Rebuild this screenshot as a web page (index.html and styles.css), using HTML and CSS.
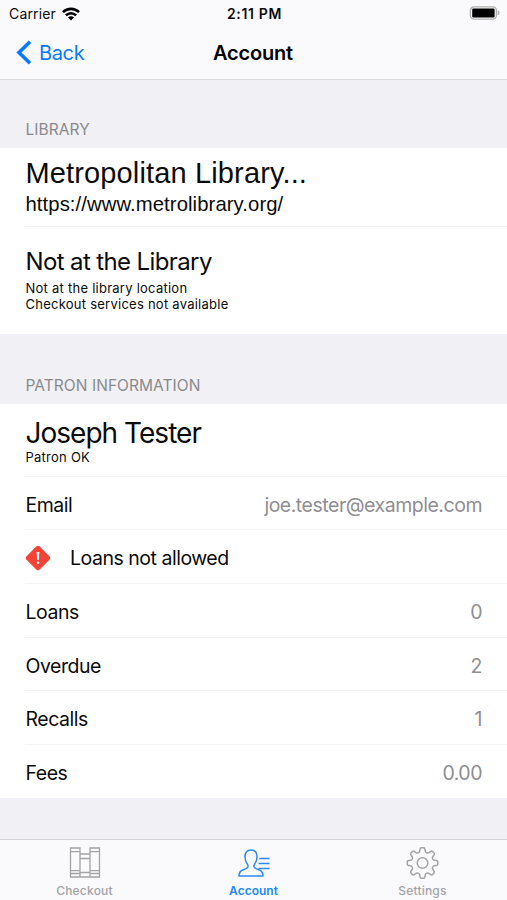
FILE: index.html
```html
<!DOCTYPE html>
<html lang="en">
<head>
<meta charset="utf-8">
<title>Account</title>
<link rel="stylesheet" href="styles.css">
</head>
<body>
<div class="app">
  <header class="top">
    <div class="status">
      <div class="carrier"><span>Carrier</span>
        <svg width="18" height="14" viewBox="0 0 18 14"><path d="M1 5.2A11.3 11.3 0 0 1 17 5.2M3.9 8.3A7.2 7.2 0 0 1 14.1 8.3" fill="none" stroke="#000" stroke-width="2.6"/><path d="M9 13.4L6 10.5A4.2 4.2 0 0 1 12 10.5Z"/></svg>
      </div>
      <span class="time">2:11 PM</span>
      <svg class="battery" width="31" height="15" viewBox="0 0 31 15"><rect x="1.4" y=".9" width="26" height="12.2" rx="3.5" fill="#fafafc" stroke="#b0b0b0" stroke-width="1.4"/><rect x="3.2" y="2.6" width="22.4" height="8.8" rx="1.2"/><path d="M28.7 4.6Q30.6 5.1 30.6 7T28.7 9.4Z" fill="#b0b0b0"/></svg>
    </div>
    <nav class="nav">
      <a class="back"><svg width="16" height="25" viewBox="0 0 16 25"><path d="M14 1.8L3 12.5L14 23.2" fill="none" stroke="#087aff" stroke-width="3.6"/></svg><span>Back</span></a>
      <h1 class="title">Account</h1>
      <span></span>
    </nav>
  </header>
  <main class="content">
    <h2 class="section section-library">LIBRARY</h2>
    <section class="group">
      <div class="row library"><div class="library-name">Metropolitan Library...</div><div class="library-url">https://www.metrolibrary.org/</div></div>
      <div class="row location"><div class="location-title">Not at the Library</div><div class="note note-location">Not at the library location</div><div class="note">Checkout services not available</div></div>
    </section>
    <h2 class="section section-patron">PATRON INFORMATION</h2>
    <section class="group">
      <div class="row patron"><div class="patron-name">Joseph Tester</div><div class="note">Patron OK</div></div>
      <div class="row item email"><span>Email</span><span class="value">joe.tester@example.com</span></div>
      <div class="row item alert"><svg width="26" height="26" viewBox="0 0 26 26"><path d="M11.5 1.3Q13 0 14.5 1.3L24.7 11.5Q26 13 24.7 14.5L14.5 24.7Q13 26 11.5 24.7L1.3 14.5Q0 13 1.3 11.5Z" fill="#f44336"/><path d="M11.7 7H14.3L13.9 15H12.1Z" fill="#fff"/><circle cx="13" cy="17.7" r="1.3" fill="#fff"/></svg><span>Loans not allowed</span></div>
      <div class="row item"><span>Loans</span><span class="value">0</span></div>
      <div class="row item overdue"><span>Overdue</span><span class="value">2</span></div>
      <div class="row item"><span>Recalls</span><span class="value">1</span></div>
      <div class="row item fees"><span>Fees</span><span class="value">0.00</span></div>
    </section>
  </main>
  <footer class="tabs">
    <a class="tab"><svg width="34" height="34" viewBox="0 0 34 34" fill="none" stroke="#a3a3a6" stroke-width="1.3"><path d="M2.5 2h9.5v29h-9.5zM12 8h10v23H12zM22 2h9.5v29H22zM2.5 5.7H12M2.5 24.7H12M2.5 27.5H12M12 12.5h10M12 26.5h10M22 5.7h9.5M22 24.7h9.5M22 27.5h9.5"/></svg><span>Checkout</span></a>
    <a class="tab active"><svg width="34" height="34" viewBox="0 0 34 34" fill="none" stroke="#2b8bf4" stroke-width="1.5" stroke-linejoin="round"><path d="M14 4C9.8 4 8 7 8 11C8 14.4 9 16.5 10.5 18.5C11.6 20 11.2 21.7 9 22.6L5 24.3C2.6 25.3 2.2 27 2 30H26C25.8 27 25.4 25.3 23 24.3L19 22.6C16.8 21.7 16.4 20 17.5 18.5C19 16.5 20 14.4 20 11C20 7 18.2 4 14 4Z"/><path d="M22.3 12.5H32.5M21.5 17.5H32.5M21.5 22.5H32.5"/></svg><span>Account</span></a>
    <a class="tab"><svg width="34" height="34" viewBox="-16.5 -17 34 34" fill="none" stroke="#a3a3a6" stroke-width="1.5"><defs><path id="tooth" d="M-4.4 -10.6C-3.2 -10.1 -2.9 -11.2 -2.7 -12.3L-2.2 -14.5Q-2 -15.2 -1.3 -15.2H1.3Q2 -15.2 2.2 -14.5L2.7 -12.3C2.9 -11.2 3.2 -10.1 4.4 -10.6"/></defs><use href="#tooth"/><use href="#tooth" transform="rotate(45)"/><use href="#tooth" transform="rotate(90)"/><use href="#tooth" transform="rotate(135)"/><use href="#tooth" transform="rotate(180)"/><use href="#tooth" transform="rotate(225)"/><use href="#tooth" transform="rotate(270)"/><use href="#tooth" transform="rotate(315)"/><circle r="5.3"/></svg><span>Settings</span></a>
  </footer>
</div>
</body>
</html>
```
FILE: styles.css
```css
* { box-sizing: border-box; }
body { margin: 0; font-family: Inter, sans-serif; color: #0b0b0b; }
svg { display: block; flex: none; }
.app { width: 507px; height: 900px; display: flex; flex-direction: column; background: #f0f0f5; overflow: hidden; white-space: nowrap; }
.top { height: 80px; background: #fafafc; border-bottom: 1px solid #dcdce0; }
.status { height: 27px; padding: 0 7px 0 9px; display: grid; grid-template-columns: 1fr auto 1fr; align-items: center; font-size: 14px; line-height: 27px; }
.carrier { display: flex; align-items: center; gap: 6px; letter-spacing: .15px; }
.time { font-weight: 600; font-size: 14px; letter-spacing: .65px; }
.battery { justify-self: end; }
.nav { height: 51px; padding: 0 17px 0 16px; display: grid; grid-template-columns: 1fr auto 1fr; align-items: center; line-height: 50px; }
.back { display: flex; align-items: center; gap: 7px; font-size: 20px; letter-spacing: -.35px; color: #087aff; }
.title { margin: 0; font-size: 20px; font-weight: 600; letter-spacing: -.2px; color: #000; }
.content { flex: 1; }
.section { margin: 0; padding-left: 25.5px; font-size: 15.5px; font-weight: 400; line-height: 20px; letter-spacing: .06px; color: #8a8a8e; }
.section-library { height: 68px; padding-top: 40px; }
.section-patron { height: 70px; padding-top: 42px; }
.group { background: #fff; }
.row { margin-left: 25px; padding: 0 25px 0 .5px; border-bottom: 1px solid #f4f4f5; }
.row:last-child { border-bottom: 0; }
.library { height: 79px; padding-top: 8px; font-family: "Liberation Sans", sans-serif; }
.library-name { font-size: 29px; line-height: 34px; letter-spacing: .14px; }
.library-url { font-size: 20.3px; line-height: 28px; letter-spacing: .08px; }
.location { height: 107px; padding-top: 19px; }
.location-title { font-size: 24px; line-height: 32px; letter-spacing: -.62px; }
.note { font-size: 13px; line-height: 16px; letter-spacing: .25px; }
.note-location { margin-top: 2px; }
.patron { height: 73px; padding-top: 13px; }
.patron-name { font-size: 28px; line-height: 32px; letter-spacing: -.98px; }
.item { height: 54px; padding-top: 2px; display: flex; align-items: center; justify-content: space-between; font-size: 19.5px; line-height: 24px; letter-spacing: -.48px; }
.email, .overdue, .fees { height: 53px; }
.email { padding-top: 4px; }
.overdue, .fees { padding-top: 3px; }
.value { color: #8e8e93; }
.alert { padding-left: 0; justify-content: flex-start; gap: 19px; }
.tabs { height: 61px; padding-top: 6px; display: flex; background: #fafafc; border-top: 1px solid #d4d4d8; }
.tab { flex: 1; display: flex; flex-direction: column; align-items: center; font-size: 12px; font-weight: 500; line-height: 22px; letter-spacing: .2px; color: #a3a3a6; }
.active { color: #2089fa; font-weight: 600; letter-spacing: 0; }
```
